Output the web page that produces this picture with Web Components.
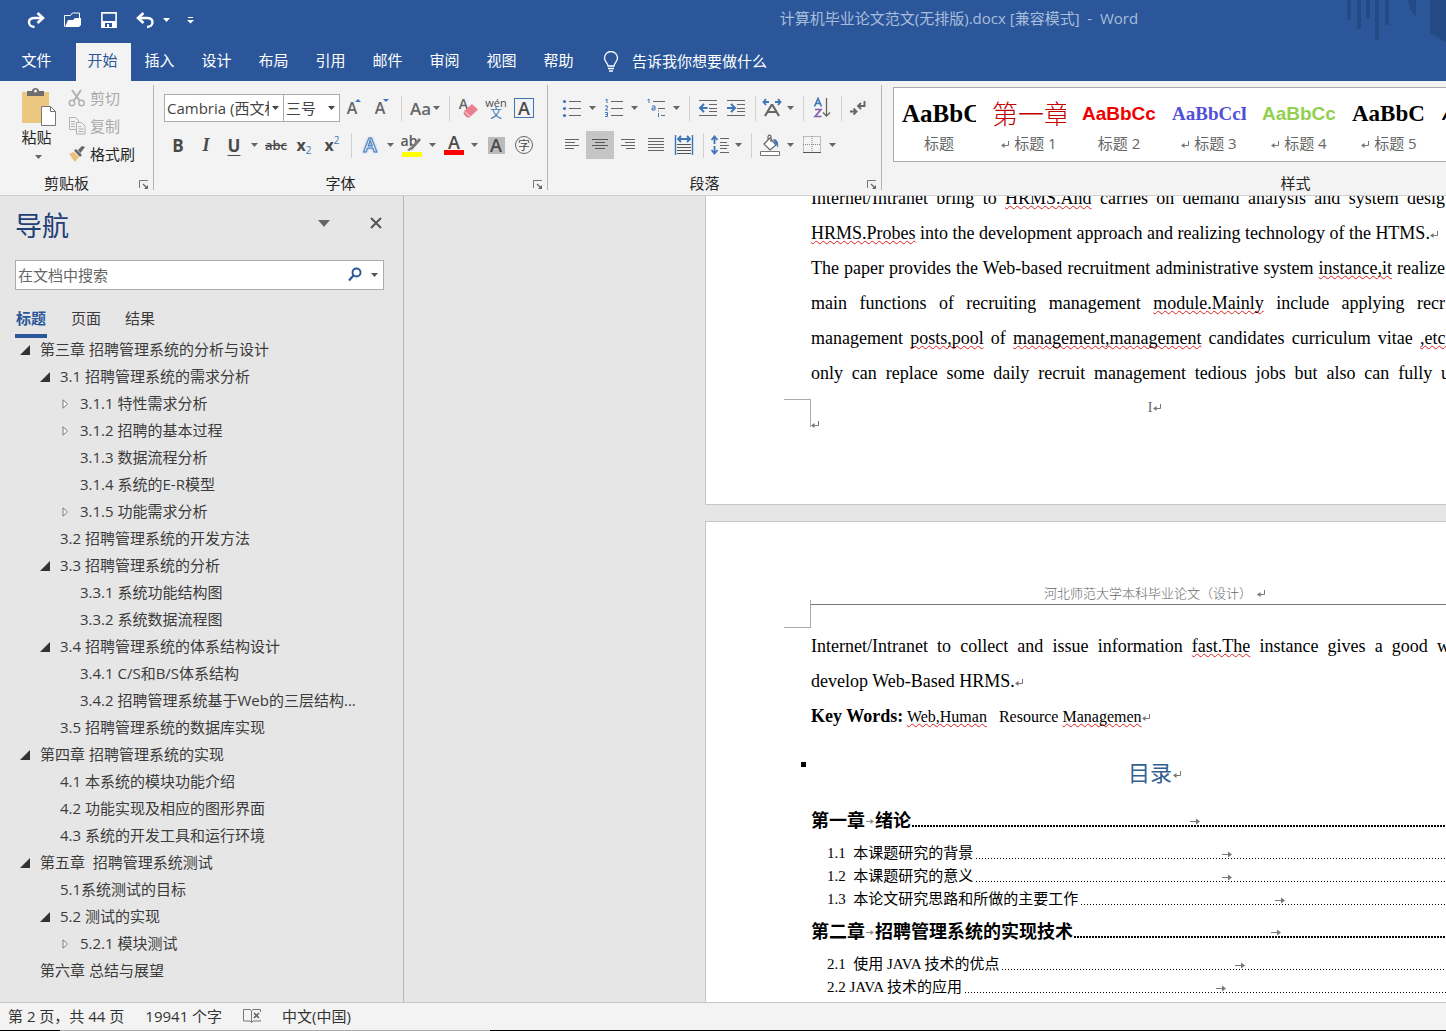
<!DOCTYPE html>
<html lang="zh-CN">
<head>
<meta charset="utf-8">
<title>计算机毕业论文范文(无排版).docx - Word</title>
<style>
html, body { height: 100%; margin: 0; }
body { overflow: hidden; font: 15px/20px "Open Sans", "Noto Sans CJK SC", sans-serif; color: #262626; }
</style>
</head>
<body>
<word-app></word-app>
<script>
const RESET = `
*, *::before { box-sizing: border-box; }
button, input, select { font: inherit; color: inherit; background: none; border: 0; padding: 0; margin: 0; border-radius: 0; outline: 0; }
button { cursor: pointer; }
a { color: inherit; text-decoration: none; }
svg { display: block; }
`;
function define(name, html) {
  const tpl = document.createElement('template');
  customElements.define(name, class extends HTMLElement {
    constructor() {
      super();
      const source = typeof html === 'function' ? html(this) : html;
      tpl.innerHTML = `<style>${RESET}</style>${source}`;
      this.attachShadow({ mode: 'open' }).appendChild(tpl.content.cloneNode(true));
    }
  });
}

/* name: [width, height, markup] */
const ICONS = {
  redo: [20, 18, '<path d="M15 7H8.500C4.500 7 3 9 3 11.300S4.800 16 8.500 16" fill="none" stroke="#fff" stroke-width="2.400"/><path d="M11.500 2l5.500 5-5.500 5" fill="none" stroke="#fff" stroke-width="2.600"/>'],
  undo: [20, 18, '<path d="M4 7h8c4 0 5.500 2 5.500 4.300S15.700 16 12 16" fill="none" stroke="#fff" stroke-width="2.400"/><path d="M8.500 2L3 7l5.500 5" fill="none" stroke="#fff" stroke-width="2.600"/>'],
  open: [20, 18, '<path d="M1.500 15.500V4.500h6L9.500 2h7v5" fill="none" stroke="#fff"/><path d="M2 16L5 9h5l2-2h6v7l-2 2z" fill="#fff"/>'],
  save: [18, 18, '<path d="M1.900 1.900h14.200v14.200H1.900z" fill="none" stroke="#fff" stroke-width="1.600"/><path d="M2 10h14v6H2z" fill="#fff"/><path d="M5 12h7v4H5z" fill="#2b579a"/><path d="M7 13h2v3H7z" fill="#fff"/>'],
  caret: [7, 4, '<path d="M0 0h7L3.500 4z" fill="currentColor"/>'],
  bigcaret: [12, 7, '<path d="M0 0h12L6 7z" fill="currentColor"/>'],
  custom: [7, 7, '<path d="M1 0h5v1H1zM0 3h7L3.500 6.500z" fill="#fff"/>'],
  bulb: [16, 22, '<path d="M5 15c0-3-3.500-4-3.500-8a6.500 6.500 0 0 1 13 0c0 4-3.500 5-3.500 8z" fill="none" stroke="#fff" stroke-width="1.300"/><path d="M5 17.500h6M6 20h4" stroke="#fff" stroke-width="1.300"/>'],
  paste: [36, 38, '<path d="M1 4h27v31H1z" fill="#ecc77f"/><path d="M6 3h5c0-4 7-4 7 0h5v5H6z" fill="#6d6d6d"/><circle cx="14.500" cy="3" r="1.500" fill="#f3f3f3"/><path d="M20.500 18.500h9l5 5v14h-14z" fill="#fff" stroke="#777"/><path d="M29.500 18.500v5h5" fill="none" stroke="#777"/>'],
  cut: [18, 18, '<g fill="none" stroke="#b0b0b0"><path d="M4 1l7.500 10.500M13 1L6 11.500" stroke-width="2"/><circle cx="4" cy="14" r="2.700" stroke-width="1.500"/><circle cx="13.500" cy="14" r="2.700" stroke-width="1.500"/></g>'],
  copy: [18, 18, '<g fill="#f3f3f3" stroke="#b0b0b0"><path d="M1.500 .5h6l3 3v9h-9z"/><path d="M3 4.500h4M3 7h4M3 9.500h4"/><path d="M8.500 5.500h5l3.500 3.500v8H8.500z"/><path d="M10.500 9.500h3M10.500 12h5M10.500 14.500h5"/></g>'],
  brush: [18, 18, '<path d="M1 9l5-2 5 5-4 5z" fill="#ecc07a"/><path d="M6 5.500l2-1.500 6 6-2 2z" fill="#666"/><path d="M10 5l4-4 3 1-4.500 6z" fill="#666"/>'],
  launch: [10, 10, '<path d="M.5 8V.5H9" fill="none" stroke="#777"/><path d="M4 4l4 4" stroke="#666" stroke-width="1.200"/><path d="M9 5v4H5z" fill="#666"/>'],
  grow: [18, 20, '<path d="M10 4l3-3 3 3z" fill="#3e75b8"/>'],
  shrink: [18, 20, '<path d="M10 1h6l-3 3z" fill="#3e75b8"/>'],
  eraser: [20, 20, '<path d="M6 12l8-7 6 5.500-8.500 8H9L5.500 15z" fill="#e8808f"/><path d="M7 12.500l5 5" stroke="#f3f3f3"/>'],
  hl: [22, 22, '<path d="M1 17h20v5H1z" fill="#ff0"/><path d="M18 3l2 2-8 9-4 2-2-1 5-4z" fill="#777"/>'],
  bullets: [20, 20, '<g fill="#3e75b8"><circle cx="2.500" cy="3.500" r="1.600"/><circle cx="2.500" cy="10.500" r="1.600"/><circle cx="2.500" cy="17.500" r="1.600"/></g><path d="M7 3.500h12M7 10.500h12M7 17.500h12" stroke="#666"/>'],
  numbers: [20, 20, '<g fill="none" stroke="#3e75b8"><path d="M1.500 2L3 1v4M1 8h2.500v1.500L1.500 12H4M1 14.500h2.500v4H1M1.500 16.500h2"/></g><path d="M7 3.500h12M7 10.500h12M7 17.500h12" stroke="#666"/>'],
  multi: [20, 20, '<g fill="none" stroke="#3e75b8"><path d="M1.500 2L3 1v4M6 8h3v4H6v-2h3M12.500 15v4M12.500 12.500v1"/></g><path d="M7 3.500h12M12 10.500h7M15 17.500h4" stroke="#666"/>'],
  outdent: [20, 18, '<path d="M1 1.500h18M11 5.500h8M11 9.500h8M11 12.500h8M1 16.500h18" stroke="#666"/><path d="M9.500 9H3M6 5L2 9l4 4" fill="none" stroke="#3e75b8" stroke-width="2"/>'],
  indent: [20, 18, '<path d="M1 1.500h18M11 5.500h8M11 9.500h8M11 12.500h8M1 16.500h18" stroke="#666"/><path d="M1 9h7M5 5l4 4-4 4" fill="none" stroke="#3e75b8" stroke-width="2"/>'],
  scaleA: [20, 20, '<path d="M1 4h6M13 4h6M4 1L1.500 4 4 7M16 1l2.500 3L16 7" fill="none" stroke="#3e75b8" stroke-width="1.800"/><path d="M3 18L9.500 7h1L17 18M6 14h8" fill="none" stroke="#666" stroke-width="2.200"/>'],
  sort: [18, 22, '<path d="M1.500 9.500L5 1.500l3.500 8M3 6.500h4" fill="none" stroke="#3e75b8" stroke-width="1.600"/><path d="M2 12.500h6l-6 7h6.500" fill="none" stroke="#8a5aa8" stroke-width="1.600"/><path d="M13.500 1v18M10 15.500l3.500 3.500 3.500-3.500" fill="none" stroke="#666" stroke-width="1.300"/>'],
  marks: [18, 18, '<path d="M15.500 2v5H10M12 4L9 7l3 3M1 12.500h6M4.500 9.500l3 3-3 3" fill="none" stroke="#666" stroke-width="1.900"/>'],
  left: [16, 14, '<path d="M1 1.500h14M1 4.500h10M1 7.500h14M1 10.500h9" stroke="#666"/>'],
  center: [18, 14, '<path d="M1 1.500h16M4 4.500h10M1 7.500h16M4 10.500h10" stroke="#555"/>'],
  right: [16, 14, '<path d="M1 1.500h14M5 4.500h10M1 7.500h14M6 10.500h9" stroke="#666"/>'],
  justify: [18, 14, '<path d="M1 .5h16M1 3.500h16M1 6.500h16M1 9.500h16M1 12.500h16" stroke="#666"/>'],
  spread: [20, 20, '<path d="M1.500 0v20M18.500 0v20" stroke="#3e75b8" stroke-width="1.400"/><path d="M4 4h12M7 1L4 4l3 3M13 1l3 3-3 3" fill="none" stroke="#3e75b8" stroke-width="1.800"/><path d="M3 9.500h14M3 12.500h14M3 15.500h14M3 18.500h14" stroke="#555"/>'],
  spacing: [20, 20, '<path d="M4.500 2v7M1.500 5l3-3.500 3 3.500M4.500 11v7M1.500 15l3 3.500 3-3.500" fill="none" stroke="#3e75b8" stroke-width="1.800"/><path d="M10 3.500h9M10 7.500h7M10 10.500h9M10 13.500h7M10 17.500h9" stroke="#666"/>'],
  bucket: [22, 22, '<path d="M5 10l6-6 6 7-6 5zM9 7V3c0-2.500 3-2.500 3 0v5" fill="#fff" stroke="#666" stroke-width="1.200"/><path d="M14 5c4 0 6 3 5 9-1-3-3-4-3-5z" fill="#3e75b8"/><path d="M1.500 17.500h19v4h-19z" fill="#fff" stroke="#777"/>'],
  border: [18, 18, '<path d="M.5 .5h17v16M.5 .5v16M9 0v16M0 8.500h18" fill="none" stroke="#888" stroke-dasharray="1 1"/><path d="M0 16.500h18" stroke="#555"/>'],
  find: [16, 16, '<circle cx="9.500" cy="5.500" r="4" fill="none" stroke="#2b579a" stroke-width="1.900"/><path d="M6.500 8.500L2 13.500" stroke="#2b579a" stroke-width="2.200"/>'],
  close: [12, 12, '<path d="M1 1l10 10M11 1L1 11" stroke="#555" stroke-width="2"/>'],
  opened: [10, 10, '<path d="M10 0v10H0z" fill="#333"/>'],
  closed: [10, 10, '<path d="M3 .8L7.500 5 3 9.200z" fill="#fff" stroke="#777"/>'],
  proof: [18, 14, '<path d="M8.500 13L7 12H.5V.5H7l1.500 1.200L10 .5h7.500V3M8.500 2v11.500L10 12h7.500v-1" fill="none" stroke="#777"/><path d="M11 4l5 5M16 4l-5 5" stroke="#666" stroke-width="1.700"/>'],
  ret: [9, 8, '<path d="M7.500 0v4.500H1.500" fill="none" stroke="#777"/><path d="M0 4.500L3.500 2v5z" fill="#777"/>'],
  tab: [8, 7, '<path d="M0 3.500h6" stroke="#888"/><path d="M8 3.500L4.500 1v5z" fill="#888"/>'],
  tablong: [10, 7, '<path d="M0 3.500h7" stroke="#777"/><path d="M10 3.500L6 .5v6z" fill="#777"/>'],
  deco: [100, 43, '<g fill="#244a84"><path d="M1 0h4v20H1zM11 0h4v29h-4zM20 0h4v19h-4zM29 0h4v40h-4zM39 0h4v25h-4zM62 0h8v17Q63 10 62 0zM84 0h16v42L84 33z"/></g>']
};
define('w-icon', el => {
  const [w, h, body] = ICONS[el.getAttribute('name')];
  return `<style>:host{display:block;flex:none}</style><svg width="${w}" height="${h}" viewBox="0 0 ${w} ${h}" aria-hidden="true">${body}</svg>`;
});
define('para-mark', `<style>:host{display:inline-block;vertical-align:0}</style><w-icon name="ret"></w-icon>`);

/* ---------- title bar and tabs ---------- */
define('title-bar', `<style>
:host{display:flex;align-items:center;height:43px;background:#2b579a;position:relative;color:#a9bddb}
.quick{display:flex;align-items:center;flex:0 0 472px;padding:0 0 3px 26px;gap:17px}
.pair{display:flex;align-items:center;gap:8px;color:#fff}
.quick button{display:block}
.title{flex:1;text-align:center;padding-bottom:7px;white-space:pre}
.deco{position:absolute;right:0;top:0}
</style>
<div class="quick">
<button aria-label="恢复"><w-icon name="redo"></w-icon></button>
<button aria-label="打开"><w-icon name="open"></w-icon></button>
<button aria-label="保存"><w-icon name="save"></w-icon></button>
<span class="pair"><button aria-label="撤消"><w-icon name="undo"></w-icon></button><button aria-label="撤消列表"><w-icon name="caret"></w-icon></button></span>
<button aria-label="自定义"><w-icon name="custom"></w-icon></button>
</div>
<w-icon class="deco" name="deco"></w-icon>
<div class="title">计算机毕业论文范文(无排版).docx [兼容模式]  -  Word</div>`);

define('ribbon-tab', `<style>
:host{display:block;width:55px}
button{width:100%;height:38px;padding:0 2px 5px 0;color:#fff}
:host([active]) button{background:#f3f3f3;color:#2b579a}
</style><button role="tab"><slot></slot></button>`);
define('ribbon-tabs', `<style>
:host{display:flex;height:38px;background:#2b579a;color:#fff;gap:2px;padding-left:10px}
.file{margin-right:9px}
label{display:flex;align-items:center;gap:13px;padding-left:14px}
input{width:200px;height:24px;padding-bottom:2px}
input::placeholder{color:#fff;opacity:1}
</style>
<ribbon-tab class="file">文件</ribbon-tab><ribbon-tab active>开始</ribbon-tab><ribbon-tab>插入</ribbon-tab><ribbon-tab>设计</ribbon-tab><ribbon-tab>布局</ribbon-tab><ribbon-tab>引用</ribbon-tab><ribbon-tab>邮件</ribbon-tab><ribbon-tab>审阅</ribbon-tab><ribbon-tab>视图</ribbon-tab><ribbon-tab>帮助</ribbon-tab>
<label><w-icon name="bulb"></w-icon><input aria-label="告诉我你想要做什么" placeholder="告诉我你想要做什么"></label>`);

/* ---------- ribbon ---------- */
define('ribbon-group', el => `<style>
:host{display:flex;flex-direction:column;height:114px;position:relative}
.body{flex:1;display:flex;flex-direction:column;gap:9px;padding-top:13px}
.foot{display:flex;align-items:center;height:24px;padding-right:5px}
.foot span{flex:1;text-align:center;padding:0 6px 1px 0}
.rule{position:absolute;right:0;top:4px;bottom:5px;width:1px;background:#b4b4b4}
button{padding-top:4px}
:host([plain]) .rule,:host([plain]) button{display:none}
</style><div class="body"><slot></slot></div>
<div class="foot"><span>${el.getAttribute('label')}</span><button aria-label="${el.getAttribute('label')}设置"><w-icon name="launch"></w-icon></button></div><div class="rule"></div>`);
define('tool-row', `<style>:host{display:flex;height:28px;align-items:center}</style><slot></slot>`);
define('tool-sep', `<style>:host{display:block;width:10px;height:25px;padding-left:5px}i{display:block;width:1px;height:100%;background:#d0d0d0}</style><i></i>`);
define('tool-arrow', `<style>:host{display:block;width:14px;color:#666}button{display:grid;place-items:center;width:12px;height:28px}</style><button aria-label="更多"><w-icon name="caret"></w-icon></button>`);
define('tool-button', `<style>
:host{display:block;width:28px}
:host([tight]) {width:24px}
:host([on]) button{background:#c5c5c5}
button{display:grid;place-items:center;width:100%;height:28px;color:#4a4a4a;white-space:nowrap;position:relative}
</style><button><slot></slot></button>`);
define('clip-command', el => `<style>
:host{display:block}
button{display:flex;align-items:center;gap:4px;height:28px}
:host([off]) button{color:#aaa}
</style><button><w-icon name="${el.getAttribute('icon')}"></w-icon><slot></slot></button>`);
define('combo-box', el => `<style>
:host{display:grid;grid-template-columns:1fr 14px;align-items:center;height:28px;background:#fff;border:1px solid #ababab;color:#444}
select{appearance:none;grid-area:1/1;padding-left:2px;height:26px;width:100%;overflow:hidden;text-overflow:clip}
w-icon{grid-area:1/2;padding-left:3px}
</style><select aria-label="${el.getAttribute('label')}"><option>${el.getAttribute('value')}</option></select><w-icon name="caret"></w-icon>`);
define('style-card', `<style>
:host{display:block;flex:none;width:74px;color:#666}
button{display:block;width:100%}
.sample{height:34px;line-height:34px;overflow:hidden;white-space:nowrap;text-align:left}
.name{height:24px;line-height:24px;white-space:nowrap;margin:0 -4px}
</style><button><div class="sample"><slot name="sample"></slot></div><div class="name"><slot></slot></div></button>`);

define('word-ribbon', `<style>
:host{display:flex;height:115px;background:#f3f3f3;border-bottom:1px solid #cfcfcf;overflow:hidden}
.clip{flex:0 0 154px}.font{flex:0 0 394px}.para{flex:0 0 334px}.styles{flex:1 0 838px}
.clipbody{display:flex;padding-left:20px;gap:11px;margin-top:-10px}
.paste{display:flex;flex-direction:column;align-items:center;width:37px;padding-top:4px;align-self:flex-start}
.paste w-icon + span{line-height:22px;padding-right:4px}
.paste w-icon:last-child{margin-top:7px;color:#666}
.font tool-row{padding-left:10px}.para tool-row{padding-left:10px}
.face{width:120px}.size{width:57px;margin-left:-1px}
.b{font:bold 17px "Open Sans",sans-serif}
.i{font:italic bold 18px "Liberation Serif",serif}
.u{text-decoration:underline;text-underline-offset:3px}
.s{font:600 13px "Open Sans",sans-serif;text-decoration:line-through}
.sub{font:bold 16px/20px "Open Sans",sans-serif}
.sub small{font-size:10px;font-weight:normal;color:#3e75b8;line-height:0}
.sub .up{vertical-align:7px}.sub .dn{vertical-align:-3px}
.over{display:grid;place-items:center}.over>*{grid-area:1/1}
.over b{font:600 16px/20px "Open Sans",sans-serif;color:#666;padding-right:4px}
.over.eraser b{font-size:14px;padding:0 9px 9px 0}
.over.hl b{font-size:14px;padding:0 6px 10px 0;color:#555}
.aa{font:600 17px "Open Sans",sans-serif;color:#666;padding-left:4px}
.py{display:grid;font:11px/11px "Open Sans","Noto Sans CJK SC",sans-serif;justify-items:center}
.py span{color:#3e75b8;font-size:12px;line-height:12px}
.box{width:20px;height:20px;border:1px solid #3e75b8;font:600 18px/18px "Open Sans",sans-serif;text-align:center}
.glow{font:600 20px/22px "Open Sans",sans-serif;color:#fff;-webkit-text-stroke:1px #3e75b8;text-shadow:0 0 3px #6aa6e8}
.red{font:600 18px/15px "Open Sans",sans-serif;border-bottom:5px solid #f00;width:20px;text-align:center}
.gray{background:#bbb;width:17px;height:17px;font:600 18px/17px "Open Sans",sans-serif;text-align:center}
.ring{width:18px;height:18px;border:1px solid #666;border-radius:50%;font:12px/15px "Noto Sans CJK SC",sans-serif;text-align:center}
.gallery{display:flex;gap:16px;height:75px;margin:-7px 0 0 11px;padding:9px 8px;background:#fff;border:1px solid #ababab;overflow:hidden}
.serif{font-family:"Liberation Serif",serif;font-weight:bold}
.sans{font-family:"Liberation Sans",sans-serif;font-weight:bold}
</style>
<ribbon-group class="clip" label="剪贴板"><div class="clipbody">
<button class="paste"><w-icon name="paste"></w-icon><span>粘贴</span><w-icon name="caret"></w-icon></button>
<div><clip-command icon="cut" off>剪切</clip-command><clip-command icon="copy" off>复制</clip-command><clip-command icon="brush">格式刷</clip-command></div>
</div></ribbon-group>
<ribbon-group class="font" label="字体">
<tool-row><combo-box class="face" label="字体" value="Cambria (西文标题)"></combo-box><combo-box class="size" label="字号" value="三号"></combo-box>
<tool-button><span class="over"><b>A</b><w-icon name="grow"></w-icon></span></tool-button><tool-button><span class="over"><b>A</b><w-icon name="shrink"></w-icon></span></tool-button><tool-sep></tool-sep>
<tool-button tight><span class="aa">Aa</span></tool-button><tool-arrow></tool-arrow><tool-sep></tool-sep>
<tool-button><span class="over eraser"><b>A</b><w-icon name="eraser"></w-icon></span></tool-button><tool-button><span class="py">wén<span>文</span></span></tool-button><tool-button><span class="box">A</span></tool-button></tool-row>
<tool-row><tool-button><span class="b">B</span></tool-button><tool-button><span class="i">I</span></tool-button><tool-button><span class="b u">U</span></tool-button><tool-arrow></tool-arrow><tool-button><span class="s">abc</span></tool-button><tool-button><span class="sub">x<small class="dn">2</small></span></tool-button><tool-button><span class="sub">x<small class="up">2</small></span></tool-button><tool-sep></tool-sep>
<tool-button><span class="glow">A</span></tool-button><tool-arrow></tool-arrow><tool-button><span class="over hl"><b>ab</b><w-icon name="hl"></w-icon></span></tool-button><tool-arrow></tool-arrow><tool-button><span class="red">A</span></tool-button><tool-arrow></tool-arrow><tool-button><span class="gray">A</span></tool-button><tool-button><span class="ring">字</span></tool-button></tool-row>
</ribbon-group>
<ribbon-group class="para" label="段落">
<tool-row><tool-button><w-icon name="bullets"></w-icon></tool-button><tool-arrow></tool-arrow><tool-button><w-icon name="numbers"></w-icon></tool-button><tool-arrow></tool-arrow><tool-button><w-icon name="multi"></w-icon></tool-button><tool-arrow></tool-arrow><tool-sep></tool-sep><tool-button><w-icon name="outdent"></w-icon></tool-button><tool-button><w-icon name="indent"></w-icon></tool-button><tool-sep></tool-sep><tool-button tight><w-icon name="scaleA"></w-icon></tool-button><tool-arrow></tool-arrow><tool-sep></tool-sep><tool-button><w-icon name="sort"></w-icon></tool-button><tool-sep></tool-sep><tool-button tight><w-icon name="marks"></w-icon></tool-button></tool-row>
<tool-row><tool-button><w-icon name="left"></w-icon></tool-button><tool-button on><w-icon name="center"></w-icon></tool-button><tool-button><w-icon name="right"></w-icon></tool-button><tool-button><w-icon name="justify"></w-icon></tool-button><tool-button><w-icon name="spread"></w-icon></tool-button><tool-sep></tool-sep><tool-button tight><w-icon name="spacing"></w-icon></tool-button><tool-arrow></tool-arrow><tool-sep></tool-sep><tool-button><w-icon name="bucket"></w-icon></tool-button><tool-arrow></tool-arrow><tool-button><w-icon name="border"></w-icon></tool-button><tool-arrow></tool-arrow></tool-row>
</ribbon-group>
<ribbon-group class="styles" label="样式" plain><div class="gallery">
<style-card><span slot="sample" class="serif" style="font-size:25px;color:#000">AaBbC</span>标题</style-card>
<style-card><span slot="sample" style="font-size:26px;font-weight:300;color:#c00000">第一章</span><para-mark></para-mark> 标题 1</style-card>
<style-card><span slot="sample" class="sans" style="font-size:19px;color:#f00000">AaBbCc</span>标题 2</style-card>
<style-card><span slot="sample" class="serif" style="font-size:19px;color:#5050d8">AaBbCcD</span><para-mark></para-mark> 标题 3</style-card>
<style-card><span slot="sample" class="sans" style="font-size:19px;color:#92d050">AaBbCc</span><para-mark></para-mark> 标题 4</style-card>
<style-card><span slot="sample" class="serif" style="font-size:23px;color:#000">AaBbC</span><para-mark></para-mark> 标题 5</style-card>
<style-card><span slot="sample" class="sans" style="font-size:19px;font-style:italic;color:#000">A</span></style-card>
</div></ribbon-group>`);

/* ---------- navigation pane ---------- */
define('nav-item', el => {
  const level = Number(el.getAttribute('level'));
  const state = el.getAttribute('state');
  return `<style>
:host{display:flex;align-items:center;height:27px;padding-left:${level * 20}px}
.twist{flex:0 0 20px}
a{flex:1;overflow:hidden;text-overflow:ellipsis;white-space:pre;color:#3b3b3b}
</style><span class="twist">${state ? `<button aria-label="展开或折叠"><w-icon name="${state}"></w-icon></button>` : ''}</span><a href="#"><slot></slot></a>`;
});
const OUTLINE = [
  [1, 'opened', '第三章 招聘管理系统的分析与设计'], [2, 'opened', '3.1 招聘管理系统的需求分析'],
  [3, 'closed', '3.1.1 特性需求分析'], [3, 'closed', '3.1.2 招聘的基本过程'], [3, '', '3.1.3 数据流程分析'],
  [3, '', '3.1.4 系统的E-R模型'], [3, 'closed', '3.1.5 功能需求分析'], [2, '', '3.2 招聘管理系统的开发方法'],
  [2, 'opened', '3.3 招聘管理系统的分析'], [3, '', '3.3.1 系统功能结构图'], [3, '', '3.3.2 系统数据流程图'],
  [2, 'opened', '3.4 招聘管理系统的体系结构设计'], [3, '', '3.4.1 C/S和B/S体系结构'],
  [3, '', '3.4.2 招聘管理系统基于Web的三层结构...'], [2, '', '3.5 招聘管理系统的数据库实现'],
  [1, 'opened', '第四章 招聘管理系统的实现'], [2, '', '4.1 本系统的模块功能介绍'], [2, '', '4.2 功能实现及相应的图形界面'],
  [2, '', '4.3 系统的开发工具和运行环境'], [1, 'opened', '第五章  招聘管理系统测试'], [2, '', '5.1系统测试的目标'],
  [2, 'opened', '5.2 测试的实现'], [3, 'closed', '5.2.1 模块测试'], [1, '', '第六章 总结与展望']
];
define('nav-pane', `<style>
:host{display:block;background:#e6e6e6;border-right:1px solid #b8b8b8;color:#3b3b3b;overflow:hidden}
header{display:flex;align-items:center;height:64px;padding:0 21px 10px 15px;color:#666}
h2{flex:1;margin:0;padding-top:5px;font-size:27px;line-height:36px;font-weight:400;color:#1f3f77}
header button + button{margin-left:40px}
label{display:flex;align-items:center;height:30px;margin:0 19px 0 15px;padding:0 5px 0 2px;background:#fff;border:1px solid #ababab;color:#555;gap:8px}
input{flex:1;min-width:0;height:26px}
input::placeholder{color:#666;opacity:1}
nav{display:flex;gap:24px;height:48px;padding:12px 15px 0}
nav button{height:36px;padding-bottom:5px}
nav .on{width:32px;font-weight:700;color:#2b579a;border-bottom:4px solid #2b579a;padding-bottom:1px}
.tree{margin-top:-3px;padding:0 20px}
</style>
<header><h2>导航</h2><button aria-label="任务窗格选项"><w-icon name="bigcaret"></w-icon></button><button aria-label="关闭"><w-icon name="close"></w-icon></button></header>
<label><input aria-label="在文档中搜索" placeholder="在文档中搜索"><w-icon name="find"></w-icon><w-icon name="caret"></w-icon></label>
<nav><button class="on">标题</button><button>页面</button><button>结果</button></nav>
<div class="tree">${OUTLINE.map(([l, s, t]) => `<nav-item level="${l - 1}" state="${s}">${t}</nav-item>`).join('')}</div>`);

/* ---------- document ---------- */
define('doc-line', `<style>
:host{display:block;height:35px;font:18px/35px "Liberation Serif","Noto Sans CJK SC",serif;color:#000;white-space:nowrap}
:host([full]){text-align-last:justify;white-space:normal;padding-right:54px}
:host([over]){padding-right:49px}
</style><slot></slot>`);
define('spell-error', `<style>:host{text-decoration:underline wavy #e02020 1px;text-underline-offset:1px;text-decoration-skip-ink:none}</style><slot></slot>`);
define('toc-line', `<style>
:host{display:flex;align-items:center;height:23px;padding:0 21px 0 16px;font:15px/23px "Liberation Serif","Noto Sans CJK SC",serif;color:#000;white-space:pre;gap:3px}
:host([chapter]){height:42px;padding-left:0;font-size:18px;line-height:42px;font-weight:bold;gap:1px}
.text{display:flex;align-items:center;gap:1px}
.leader{flex:1;display:flex;flex-direction:column;align-items:center;margin-top:3px}
i{width:100%;height:1px;background:repeating-linear-gradient(90deg,#000 0 1px,transparent 1px 3px)}
:host([chapter]) i{height:2px;background:repeating-linear-gradient(90deg,#000 0 2px,transparent 2px 3px)}
</style><span class="text"><slot></slot></span><span class="leader"><w-icon name="tablong"></w-icon><i></i></span>`);
define('doc-page', `<style>
:host{display:block;position:relative;width:900px;padding:0 105px;background:#fff;border:1px solid #c6c6c6}
</style><slot></slot>`);
define('doc-canvas', `<style>
:host{display:flex;flex-direction:column;gap:16px;background:#e6e6e6;overflow:hidden;padding-left:301px}
doc-page{flex:none}
.first{height:325px;margin-top:-16px}
.second{height:560px}
.foot{display:flex;justify-content:center;align-items:center;gap:1px;height:30px;padding-top:4px;font:14px/30px "Liberation Serif",serif;color:#666}
.crop{position:absolute;left:78px;width:27px;height:28px;border:solid #aaa;border-width:0 1px 1px 0}
.c1{top:218px;border-width:1px 1px 0 0}
.c2{top:78px}
.end{display:block}
.head{display:flex;justify-content:center;align-items:flex-end;gap:5px;height:83px;padding-bottom:1px;border-bottom:1px solid #777;font:13px/20px "Noto Sans CJK SC",sans-serif;font-weight:300;color:#666}
.head para-mark{padding-bottom:5px}
.text{padding-top:24px}
.keys{font-size:16px}
.keys b{font-size:18px}
h1{display:flex;justify-content:center;align-items:center;gap:1px;margin:0;height:66px;padding-top:8px;font:22px/58px "Noto Sans CJK SC",sans-serif;color:#365f91}
h1 para-mark{padding-top:8px}
.dot{position:absolute;left:95px;top:240px;width:5px;height:5px;background:#000}
.toc{display:flex;flex-direction:column}
.gap{white-space:pre}
</style>
<doc-page class="first">
<doc-line full>Internet/Intranet bring to <spell-error>HRMS.And</spell-error> carries on demand analysis and system desig</doc-line>
<doc-line><spell-error>HRMS.Probes</spell-error> into the development approach and realizing technology of the HTMS.<para-mark></para-mark></doc-line>
<doc-line full>The paper provides the Web-based recruitment administrative system <spell-error>instance,it</spell-error> realize</doc-line>
<doc-line full>main functions of recruiting management <spell-error>module.Mainly</spell-error> include applying recr</doc-line>
<doc-line full over>management <spell-error>posts,pool</spell-error> of <spell-error>management,management</spell-error> candidates curriculum vitae <spell-error>,etc.</spell-error></doc-line>
<doc-line full over>only can replace some daily recruit management tedious jobs but also can fully u</doc-line>
<div class="foot">I<para-mark></para-mark></div>
<para-mark class="end"></para-mark>
<div class="crop c1"></div>
</doc-page>
<doc-page class="second">
<div class="crop c2"></div>
<div class="head">河北师范大学本科毕业论文（设计）<para-mark></para-mark></div>
<div class="text">
<doc-line full over>Internet/Intranet to collect and issue information <spell-error>fast.The</spell-error> instance gives a good w</doc-line>
<doc-line>develop Web-Based HRMS.<para-mark></para-mark></doc-line>
<doc-line class="keys"><b>Key Words:</b> <spell-error>Web,Human</spell-error><span class="gap">   </span>Resource <spell-error>Managemen</spell-error><para-mark></para-mark></doc-line>
</div>
<div class="dot"></div>
<h1>目录<para-mark></para-mark></h1>
<div class="toc">
<toc-line chapter>第一章<w-icon name="tab"></w-icon>绪论</toc-line>
<toc-line>1.1  本课题研究的背景</toc-line>
<toc-line>1.2  本课题研究的意义</toc-line>
<toc-line>1.3  本论文研究思路和所做的主要工作</toc-line>
<toc-line chapter>第二章<w-icon name="tab"></w-icon>招聘管理系统的实现技术</toc-line>
<toc-line>2.1  使用 JAVA 技术的优点</toc-line>
<toc-line>2.2 JAVA 技术的应用</toc-line>
</div>
</doc-page>`);

define('status-bar', `<style>
:host{display:block;background:#f3f3f3;border-top:1px solid #c6c6c6;color:#333}
.row{display:flex;align-items:center;gap:21px;height:27px;padding:0 0 2px 8px}
.edge{height:1px;background:linear-gradient(90deg,#000 60px,#aaa 60px 490px,#000 490px)}
</style><div class="row"><span>第 2 页，共 44 页</span><span>19941 个字</span><w-icon name="proof"></w-icon><span>中文(中国)</span></div><div class="edge"></div>`);

define('word-app', `<style>
:host{display:flex;flex-direction:column;height:100vh}
title-bar,ribbon-tabs,word-ribbon,status-bar{flex:none}
main{flex:1;min-height:0;display:flex}
nav-pane{flex:0 0 404px}
doc-canvas{flex:1;min-width:0}
</style><title-bar></title-bar><ribbon-tabs></ribbon-tabs><word-ribbon></word-ribbon><main><nav-pane></nav-pane><doc-canvas></doc-canvas></main><status-bar></status-bar>`);
</script>
</body>
</html>
